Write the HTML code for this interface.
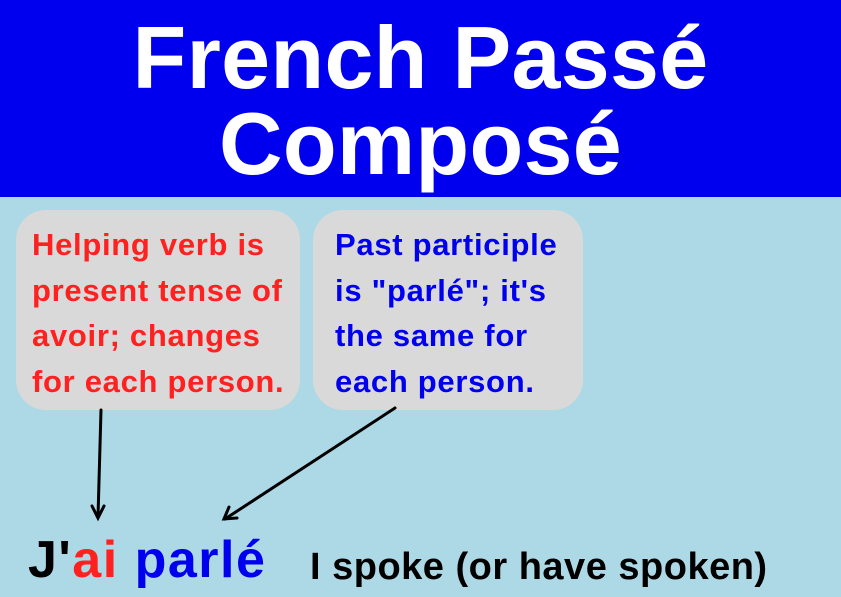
<!DOCTYPE html>
<html><head><meta charset="utf-8"><style>
body{margin:0;width:841px;height:597px;overflow:hidden;background:#add8e6;font-family:"Liberation Sans",sans-serif;position:relative}
.hd{position:absolute;left:0;top:0;width:841px;height:197px;background:#0000ee;color:#fff;font-weight:bold;font-size:88px;text-align:center;line-height:86px;padding-top:15px;box-sizing:border-box;letter-spacing:0.3px}
.b{position:absolute;top:210px;height:200px;background:#d9d9d9;border-radius:30px;font-weight:bold;font-size:31px;letter-spacing:0.7px;line-height:45.5px;padding-top:12px;box-sizing:border-box;white-space:nowrap}
.t{position:absolute;font-weight:bold;white-space:nowrap}
</style></head><body>
<div class="hd">French Passé<br>Composé</div>
<div class="b" style="left:16px;width:284px;color:#ff2020;padding-left:16px">Helping verb is<br>present tense of<br>avoir; changes<br>for each person.</div>
<div class="b" style="left:313px;width:270px;color:#0000ee;padding-left:22px">Past participle<br>is "parlé"; it's<br>the same for<br>each person.</div>
<svg style="position:absolute;left:0;top:0" width="841" height="597">
<g stroke="#000" stroke-width="3" fill="none" stroke-linecap="round">
<path d="M101 410 L98 517"/><path d="M92 506 L98 518 L104 506"/>
<path d="M395 408 L225 519"/><path d="M229 507 L224 519 L237 518"/>
</g></svg>
<div class="t" style="left:28px;top:528px;font-size:52px;letter-spacing:1.5px;line-height:64px"><span style="color:#000">J'</span><span style="color:#ff2020">ai</span> <span style="color:#0000ee">parlé</span></div>
<div class="t" style="left:310px;top:542px;font-size:38px;letter-spacing:0.5px;line-height:50px;color:#000">I spoke (or have spoken)</div>
</body></html>
